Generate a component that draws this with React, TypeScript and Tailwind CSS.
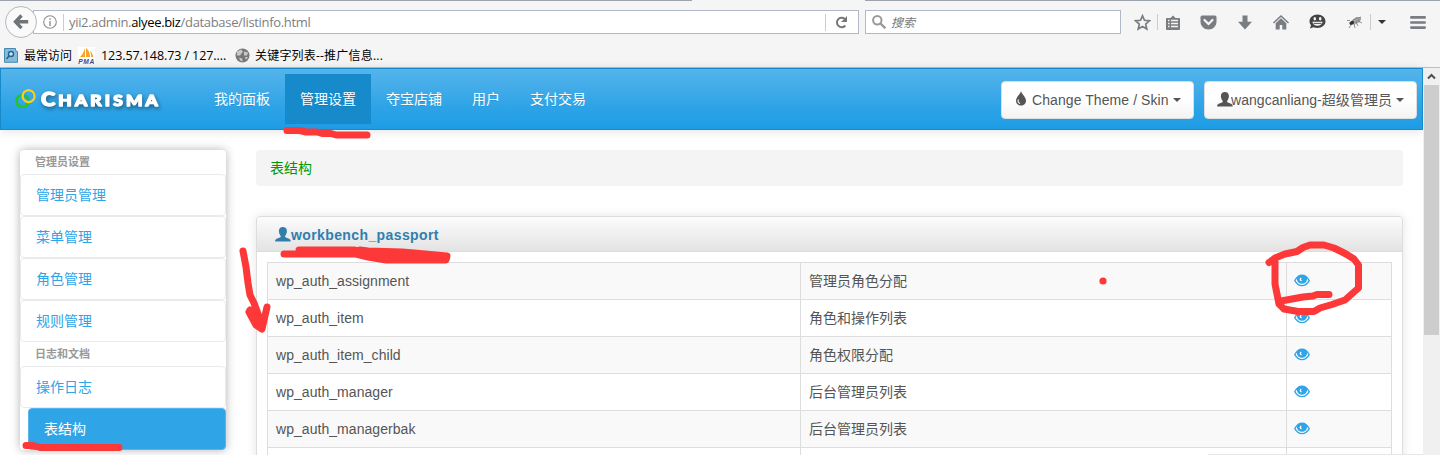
import type { ReactNode } from "react";

const cjk = "font-['Liberation_Sans','Noto_Sans_CJK_SC',sans-serif]";
const chromeFont = "font-['Open_Sans','Noto_Sans_CJK_SC',sans-serif]";

const rows: [string, string][] = [
  ["wp_auth_assignment", "管理员角色分配"],
  ["wp_auth_item", "角色和操作列表"],
  ["wp_auth_item_child", "角色权限分配"],
  ["wp_auth_manager", "后台管理员列表"],
  ["wp_auth_managerbak", "后台管理员列表"],
  ["", ""],
];

function Eye() {
  return (
    <svg width="16" height="13" viewBox="0 0 16 13" fill="none">
      <path d="M.8 6.600C2.600 3.200 5 1.100 8 1.100s5.400 2.100 7.200 5.500C13.400 9.800 11 11.700 8 11.700S2.600 9.800.8 6.600Z" stroke="#2fa4e7" strokeWidth="1.300" />
      <path d="M3.800 2.300C6 .4 10 .4 12.200 2.300c.8 1.200 1 2.300.8 3.400C12.500 8.200 10.400 9.700 8 9.700S3.500 8.200 3 5.700c-.2-1.100 0-2.200.8-3.400Z" fill="#2fa4e7" />
      <path d="M6.200 3.900c-.9 1.200-.6 2.700.8 3.400.9.200 1-.5.500-1-.6-.5-.5-1.100-.1-1.700.3-.8-.6-1.300-1.200-.7Z" fill="#fff" />
    </svg>
  );
}

function User({ className }: { className: string }) {
  return (
    <svg className={className} width="16" height="15" viewBox="0 0 16 15" fill="currentColor">
      <path d="M3.900 4.300C3.900 1.400 5.500.1 7.900.1s4 1.300 4 4.200c0 1.900-.8 3.500-1.800 4.600-.2.800.1 1.300.8 1.600l3.200 1.300c1 .4 1.600 1.300 1.600 2.700H.1c0-1.400.6-2.300 1.600-2.700l3.200-1.300c.7-.3 1-.8.8-1.600-1-1.100-1.800-2.700-1.800-4.600Z" />
    </svg>
  );
}

function Caret() {
  return <span className="ml-1 h-0 w-0 border-x-4 border-t-4 border-x-transparent border-t-[#555]" />;
}

function Slot({ w, children }: { w: string; children?: ReactNode }) {
  return <div className={`flex shrink-0 items-center justify-center ${w}`}>{children}</div>;
}

function BrowserChrome() {
  return (
    <header className={`h-[68px] border-b border-[#bebebe] bg-[#f5f5f5] ${chromeFont}`}>
      <div className="flex h-px">
        <div className="w-[692px] bg-[#9ca3af]" />
        <div className="w-[173px]" />
        <div className="flex-1 bg-[#9ca3af]" />
      </div>
      <div className="flex h-[42px] items-center">
        <div className="z-10 ml-[5px] flex size-8 shrink-0 items-center justify-center rounded-full border border-[#b2b8c2] bg-[#fafafa]">
          <svg width="16" height="16" viewBox="0 0 16 16" fill="none" stroke="#6f7479" strokeWidth="3.400">
            <path d="M8.500 1.500 2.500 7.800l6 6.300M2.500 7.800h12.700" />
          </svg>
        </div>
        <div className="-ml-1 flex h-6 w-[826px] shrink-0 items-center border border-[#b2b8c8] bg-white">
          <svg className="ml-[9px] shrink-0" width="14" height="14" viewBox="0 0 14 14" fill="none" stroke="#8d8d8d">
            <circle cx="7" cy="7" r="6.300" strokeWidth="1.100" />
            <path d="M7 6v5M7 3.300v1.500" strokeWidth="1.400" />
          </svg>
          <div className="ml-[6px] h-[17px] w-px bg-[#ccc]" />
          <div className="ml-[5px] whitespace-nowrap text-[13px] leading-[22px] tracking-[-0.33px] text-[#7e7e7e]">
            yii2.admin.<span className="text-black">alyee.biz</span>/database/listinfo.html
          </div>
          <div className="ml-auto h-[17px] w-px bg-[#ccc]" />
          <Slot w="w-[30px]">
            <svg width="13" height="13" viewBox="0 0 13 13" fill="none" stroke="#777" strokeWidth="2">
              <path d="M10.300 9.500A4.700 4.700 0 1 1 9.800 3" />
              <path d="M12 0v6H6l2.500-2.300L12 0Z" fill="#777" stroke="none" />
            </svg>
          </Slot>
          <div className="w-[2px]" />
        </div>
        <div className="ml-[6px] flex h-6 w-[256px] shrink-0 items-center border border-[#b2b8c8] bg-white">
          <svg className="ml-[6px]" width="14" height="14" viewBox="0 0 14 14" fill="none" stroke="#999" strokeWidth="2">
            <circle cx="5.300" cy="5.300" r="4.200" />
            <path d="m8.500 8.500 4.800 4.800" strokeWidth="2.400" />
          </svg>
          <span className="ml-[5px] pt-px text-[12px] italic leading-[22px] text-[#777]">搜索</span>
        </div>
        <Slot w="w-[42px]">
          <svg width="17" height="17" viewBox="0 0 17 17" fill="none" stroke="#797c80" strokeWidth="1.700">
            <path d="m8.500 1.800 2 4.500 4.900.5-3.700 3.300 1.100 4.900-4.300-2.600L4.200 15l1.100-4.900-3.700-3.300 4.900-.5Z" />
          </svg>
        </Slot>
        <div className="-ml-[6px] h-4 w-px bg-[#ccc]" />
        <Slot w="w-[31px]">
          <svg width="14" height="15" viewBox="0 0 14 15">
            <path d="M1 3h3.500L7 .5 9.500 3H13q1 0 1 1v10q0 1-1 1H1q-1 0-1-1V4q0-1 1-1Z" fill="#797c80" />
            <path d="M2 5.500h1.500M5 5.500h7M2 8.500h1.500M5 8.500h7M2 11.500h1.500M5 11.500h7" stroke="#f5f5f5" strokeWidth="1.500" />
          </svg>
        </Slot>
        <Slot w="w-[41px]">
          <svg width="17" height="15" viewBox="0 0 17 15">
            <path d="M2 .5h13q1.500 0 1.500 1.500v4.500c0 4.700-3.500 8-8 8s-8-3.300-8-8V2Q.5.500 2 .5Z" fill="#797c80" />
            <path d="m4.500 5 4 4 4-4" fill="none" stroke="#f5f5f5" strokeWidth="2.200" strokeLinecap="round" />
          </svg>
        </Slot>
        <Slot w="w-[31px]">
          <svg width="14" height="15" viewBox="0 0 14 15" fill="#797c80">
            <path d="M4.500.5h5v6.300H14L7 14.500 0 6.800h4.500Z" />
          </svg>
        </Slot>
        <Slot w="w-[41px]">
          <svg width="16" height="15" viewBox="0 0 16 15" fill="#797c80">
            <path d="m8 0 8 7.500-1 1-7-6.400-7 6.400-1-1Z" />
            <path d="m8 3.300 5.300 5V14.500h-4V10H6.700v4.500h-4V8.300Z" />
          </svg>
        </Slot>
        <Slot w="w-[33px]">
          <svg width="17" height="16" viewBox="0 0 17 16">
            <path d="M8.500.5c4.500 0 8 3 8 6.800s-3.500 6.700-8 6.700c-1.500 0-2.800-.3-4-.8L1 14.500l1-3.200C1 10.200.5 8.800.5 7.300c0-3.800 3.500-6.800 8-6.800Z" fill="#444" />
            <ellipse cx="5.800" cy="4.700" rx="1.300" ry="1.700" fill="#f5f5f5" />
            <ellipse cx="11.200" cy="4.700" rx="1.300" ry="1.700" fill="#f5f5f5" />
            <path d="M3.300 7.700h10.400c-.6 2.700-2.600 4-5.200 4s-4.600-1.300-5.200-4Z" fill="#f5f5f5" />
            <path d="M4.500 9.400h8" stroke="#444" strokeWidth=".9" />
          </svg>
        </Slot>
        <Slot w="w-[41px]">
          <svg width="16" height="14" viewBox="0 0 16 14" fill="none">
            <path d="m4 6 5-4 5 0-1 5-6 3Z" fill="#aaa" />
            <ellipse cx="4.800" cy="7.800" rx="2.500" ry="1.900" fill="#333" transform="rotate(-25 5 7.800)" />
            <path d="M0 5.500h3M2 13l2-3M8 13 7 9M11 11 9 7M15 8l-4-2M6 5l8-3M8 7l6-3" stroke="#777" strokeWidth=".8" />
          </svg>
        </Slot>
        <div className="-ml-[5px] h-4 w-px bg-[#ccc]" />
        <Slot w="w-[22px]">
          <span className="h-0 w-0 border-x-4 border-t-4 border-x-transparent border-t-[#333]" />
        </Slot>
        <div className="ml-[4px] h-[42px] w-px bg-gradient-to-b from-[#eee] via-[#ccc] to-[#eee]" />
        <Slot w="w-[43px]">
          <svg width="16" height="13" viewBox="0 0 16 13" stroke="#797c80" strokeWidth="2.600" strokeLinecap="round">
            <path d="M1.300 1.400h13.400M1.300 6.500h13.400M1.300 11.600h13.400" />
          </svg>
        </Slot>
      </div>
      <div className="mt-px flex h-6 items-center whitespace-nowrap pb-px text-[12px] leading-6 text-black">
        <svg className="ml-1 shrink-0" width="14" height="15" viewBox="0 0 14 15">
          <path d="M.5.500h11v2l2 1v10.800H.5Z" fill="#86bbdc" stroke="#4889b2" />
          <circle cx="7" cy="6" r="2.500" fill="#c8e5f5" stroke="#24658f" strokeWidth="1.400" />
          <path d="M5 8 2.500 11" stroke="#24658f" strokeWidth="1.600" />
        </svg>
        <span className="ml-[6px] w-[54px]">最常访问</span>
        <svg className="shrink-0" width="17" height="17" viewBox="0 0 17 17">
          <path fill="#fff" d="M0 0h17v17H0z" />
          <path d="M7 1v9H2c2-2 4-5 5-9Zm1 0c3 2 4 6 4 9H8V1Zm4 3c2 1 3 4 3 6h-2c0-2 0-4-1-6Z" fill="#f7a52a" />
          <text x=".3" y="16.500" fontSize="6.700" fontWeight="bold" fontStyle="italic" fontFamily="Liberation Sans" textLength="16" fill="#444488">PMA</text>
        </svg>
        <span className="ml-[6px] w-[134px] text-[12.500px] tracking-[-0.08px]">123.57.148.73 / 127....</span>
        <svg className="shrink-0" width="15" height="15" viewBox="0 0 15 15">
          <circle cx="7.500" cy="7.500" r="7" fill="#777" />
          <path d="M2 3.500 6 1.500l2 2-3 4H2Zm7 0 4 1-1 3H9Zm-5 6 3 1 1 3-3-1Zm6-.5h3l-2 3Z" fill="#c9c9c9" />
        </svg>
        <span className="ml-[5px] tracking-[0.2px]">关键字列表--推广信息...</span>
      </div>
    </header>
  );
}

function Logo() {
  return (
    <div className="flex h-[60px] w-[199px] items-center pl-[15px]">
      <svg width="21" height="20" viewBox="0 0 21 20" fill="none">
        <circle cx="7.500" cy="12" r="6" stroke="#22c52b" strokeWidth="2.700" />
        <circle cx="13.600" cy="7.200" r="6" stroke="#269de0" strokeWidth="3.500" />
        <circle cx="13.600" cy="7.200" r="6" stroke="#f7cf23" strokeWidth="2.400" />
      </svg>
      <svg className="ml-[4px] overflow-visible drop-shadow-[1px_2px_2px_rgba(0,0,0,0.45)]" width="122" height="20" viewBox="0 0 122 20">
        <text x="1" y="16.500" textLength="120" lengthAdjust="spacingAndGlyphs" fontFamily="Lato" fontWeight="900" fontSize="18" letterSpacing="2.600" fill="#fff" stroke="#fff" strokeWidth="1.300" strokeLinejoin="round">
          C<tspan fontSize="14.500">HARISMA</tspan>
        </text>
      </svg>
    </div>
  );
}

function Navbar() {
  const items = ["我的面板", "管理设置", "夺宝店铺", "用户", "支付交易"];
  const btn = "mt-3 flex h-[38px] items-center whitespace-nowrap rounded border border-[#ddd] bg-gradient-to-b from-white from-50% to-[#f3f3f3] text-[14px] text-[#555]";
  return (
    <nav className="flex h-[62px] border border-[#178acc] bg-gradient-to-b from-[#54b4eb] via-[#2fa4e7] via-60% to-[#1d9ce5] shadow-[0_1px_10px_rgba(0,0,0,0.12)]">
      <div className="-ml-px"><Logo /></div>
      {items.map((t, i) => (
        <a key={t} className={`mt-[5px] flex h-[50px] items-center whitespace-nowrap px-[15px] text-[14px] text-white [text-shadow:0_1px_0_rgba(0,0,0,0.1)] ${i === 1 ? "bg-[#178acc]" : ""}`}>{t}</a>
      ))}
      <button className={`${btn} ml-auto w-[193px] pl-[13px]`}>
        <svg className="-mt-[3px]" width="12" height="15" viewBox="0 0 12 15">
          <path d="M6 0c.6 3 5 6 5 9.700C11 12.500 8.800 14.500 6 14.500S1 12.500 1 9.700C1 6 5.400 3 6 0Z" fill="#555" />
          <path d="M3.400 8.500c-.9 2 0 3.500 1.700 4" fill="none" stroke="#fff" strokeWidth="1.100" />
        </svg>
        <span className="ml-[5px] tracking-[0.08px]">Change Theme / Skin</span><Caret />
      </button>
      <button className={`${btn} ml-[10px] mr-[5px] w-[213px] pl-[12px]`}>
        <User className="-mr-[2px] -mt-[1px]" /><span className="tracking-[0.04px]">wangcanliang-超级管理员</span><Caret />
      </button>
    </nav>
  );
}

function SideItem({ children }: { children: ReactNode }) {
  return <li className="flex h-[42px] items-center rounded border border-[#ebebeb] pl-[15px] text-[14px] text-[#2fa4e7]">{children}</li>;
}

function SideHeader({ children }: { children: ReactNode }) {
  return <li className="flex h-6 items-center pl-[15px] text-[11px] font-bold text-[#999]">{children}</li>;
}

function Sidebar() {
  return (
    <ul className="ml-5 h-[300px] w-[206px] shrink-0 rounded bg-white shadow-[0_0_10px_rgba(0,0,0,0.3)]">
      <SideHeader>管理员设置</SideHeader>
      {["管理员管理", "菜单管理", "角色管理", "规则管理"].map((t) => <SideItem key={t}>{t}</SideItem>)}
      <SideHeader>日志和文档</SideHeader>
      <SideItem>操作日志</SideItem>
      <li className="ml-2 flex h-[42px] items-center rounded border border-[#58b3e8] bg-[#2fa4e7] pl-[15px] text-[14px] text-white">表结构</li>
    </ul>
  );
}

function Annotations() {
  return (
    <svg className="pointer-events-none absolute left-0 top-0 z-20" width="1440" height="455" viewBox="0 0 1440 455" fill="none" stroke="#fd3838" strokeWidth="7" strokeLinecap="round" strokeLinejoin="round">
      <path d="m287 130.500 13 0 6 1.500h11l5 1.500h9l5 1.500h31" />
      <path d="M26 445.500h7l7 2h79" />
      <path d="M284 254h72l12 3 18 3h60l1-4-33-3-12-1-34-1-8-1" />
      <path d="M299 250h55l14 3 12 3h40" />
      <path d="m243 251 3 16 2 16 2 12 4 8 7 19m-12-10 7 13 6 4 5-22m-17 3 10 14" />
      <path d="M1269 262.500 1275 258 1285 254 1297 251.500 1303 247.500 1310 245H1324L1334 248 1346 254 1354 259 1358.500 265V288L1345 300 1332 304.500 1320 308 1314 311.500H1298L1284 309 1279 304 1277 294 1275 284V262" />
      <path d="M1281 301 1292 299 1303 297 1313 296 1317 294.500H1329" />
      <circle cx="1103" cy="281" r="3.600" fill="#fd3838" stroke="none" />
    </svg>
  );
}

export default function App() {
  return (
    <div className={`relative flex h-[455px] w-[1440px] flex-col overflow-hidden bg-white ${cjk}`}>
      <BrowserChrome />
      <div className="flex min-h-0 flex-1">
        <div className="w-[1423px] shrink-0">
          <Navbar />
          <div className="mt-5 flex">
            <Sidebar />
            <main className="ml-[30px] w-[1147px]">
              <div className="flex h-9 items-center rounded bg-[#f4f4f4] pl-[14px] text-[14px] text-[#090]">表结构</div>
              <section className="mt-[30px] h-[260px] rounded border border-[#ddd] bg-white shadow-[0_0_10px_rgba(189,189,189,0.4)]">
                <h2 className="flex h-[35px] items-center rounded-t border-b border-[#ddd] bg-gradient-to-b from-[#fcfcfc] to-[#e3e3e3] pl-[18px] pt-[2px] text-[14px] font-bold tracking-[0.39px] text-[#317eac]">
                  <User className="-mt-[2px]" />workbench_passport
                </h2>
                <table className="ml-[10px] mt-[10px] w-[1125px] table-fixed border-collapse text-[14px] text-[#555]">
                  <colgroup><col className="w-[533px]" /><col className="w-[486px]" /><col /></colgroup>
                  <tbody>
                    {rows.map(([name, note], i) => (
                      <tr key={i} className={`h-[37px] ${i % 2 === 0 ? "bg-[#f9f9f9]" : "bg-white"}`}>
                        <td className="border border-[#ddd] px-2 py-0 leading-5 tracking-[0.05px]">{name}</td>
                        <td className="border border-[#ddd] px-2 py-0 leading-5">{note}</td>
                        <td className="border border-[#ddd] px-[7px] py-0"><div className="-mt-[2px]">{name && <Eye />}</div></td>
                      </tr>
                    ))}
                  </tbody>
                </table>
              </section>
            </main>
          </div>
        </div>
        <aside className="z-10 w-[17px] bg-[#f0f0f0] px-px">
          <div className="flex h-[17px] items-center justify-center">
            <svg width="9" height="7" viewBox="0 0 9 7" fill="none" stroke="#505050" strokeWidth="2"><path d="m1 5.500 3.500-3.500L8 5.500" /></svg>
          </div>
          <div className="h-[250px] bg-[#cdcdcd]" />
        </aside>
      </div>
      <div className="absolute bottom-0 left-[1208px] h-px w-[232px] bg-[#e6e6e6]" />
      <Annotations />
    </div>
  );
}
